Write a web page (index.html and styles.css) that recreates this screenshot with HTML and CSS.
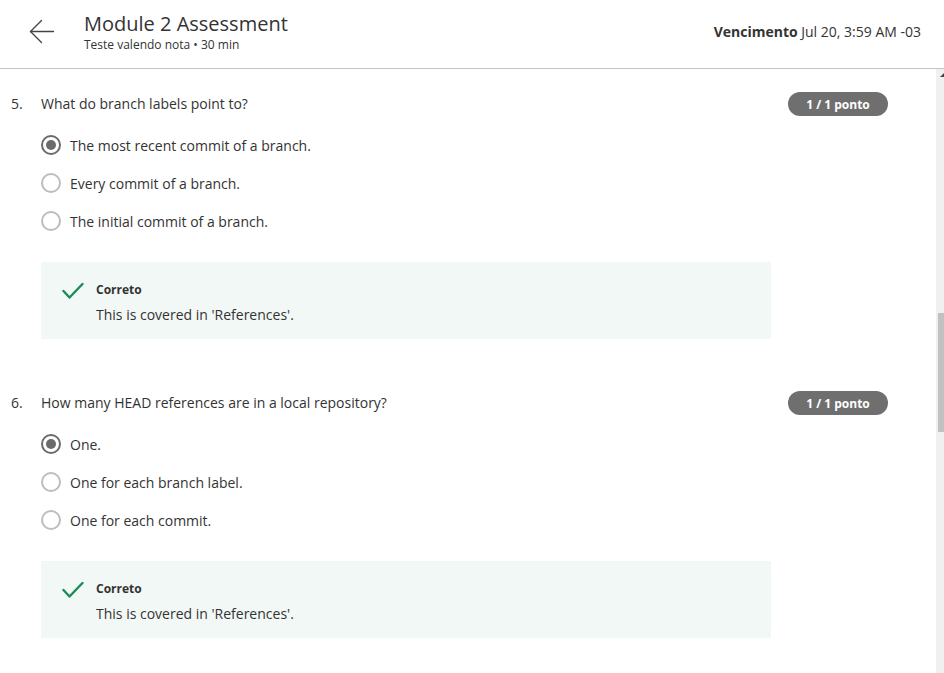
FILE: index.html
```html
<!DOCTYPE html>
<html lang="pt">
<head>
<meta charset="utf-8">
<title>Module 2 Assessment</title>
<link rel="stylesheet" href="styles.css">
</head>
<body>
<header class="topbar">
  <div class="topbar-left">
    <button class="back" aria-label="Voltar">
      <svg width="26" height="26" viewBox="0 0 26 26" fill="none" stroke="#444" stroke-width="1.4" stroke-linecap="round" stroke-linejoin="round">
        <path d="M1.5 12.5 H24.5"/>
        <path d="M12.5 1.5 L1.5 12.5 L12.5 23.5"/>
      </svg>
    </button>
    <div class="titles">
      <h1 class="title">Module 2 Assessment</h1>
      <div class="subtitle">Teste valendo nota • 30 min</div>
    </div>
  </div>
  <div class="due"><b>Vencimento</b> Jul 20, 3:59 AM -03</div>
</header>

<main class="content">
  <section class="question">
    <div class="q-head">
      <span class="q-num">5.</span>
      <span class="q-text">What do branch labels point to?</span>
      <span class="badge">1 / 1 ponto</span>
    </div>
    <ul class="options">
      <li class="option"><span class="radio checked"></span>The most recent commit of a branch.</li>
      <li class="option"><span class="radio"></span>Every commit of a branch.</li>
      <li class="option"><span class="radio"></span>The initial commit of a branch.</li>
    </ul>
    <div class="feedback">
      <svg class="check" width="22" height="18" viewBox="0 0 22 18" fill="none" stroke="#1e8a57" stroke-width="2.4" stroke-linecap="round" stroke-linejoin="round">
        <path d="M1.5 9 L7.5 15.5 L20.5 2"/>
      </svg>
      <div class="fb-body">
        <div class="fb-title">Correto</div>
        <div class="fb-text">This is covered in 'References'.</div>
      </div>
    </div>
  </section>

  <section class="question">
    <div class="q-head">
      <span class="q-num">6.</span>
      <span class="q-text">How many HEAD references are in a local repository?</span>
      <span class="badge">1 / 1 ponto</span>
    </div>
    <ul class="options">
      <li class="option"><span class="radio checked"></span>One.</li>
      <li class="option"><span class="radio"></span>One for each branch label.</li>
      <li class="option"><span class="radio"></span>One for each commit.</li>
    </ul>
    <div class="feedback">
      <svg class="check" width="22" height="18" viewBox="0 0 22 18" fill="none" stroke="#1e8a57" stroke-width="2.4" stroke-linecap="round" stroke-linejoin="round">
        <path d="M1.5 9 L7.5 15.5 L20.5 2"/>
      </svg>
      <div class="fb-body">
        <div class="fb-title">Correto</div>
        <div class="fb-text">This is covered in 'References'.</div>
      </div>
    </div>
  </section>

  <div class="scrollbar" aria-hidden="true">
    <span class="sb-arrow"></span>
    <span class="sb-thumb"></span>
  </div>
</main>
</body>
</html>
```

FILE: styles.css
```css
* { box-sizing: border-box; }
html, body { margin: 0; padding: 0; }
body {
  width: 944px;
  height: 673px;
  overflow: hidden;
  background: #fff;
  color: #333;
  font-family: "Open Sans", "Noto Sans", "Liberation Sans", sans-serif;
}

.topbar {
  height: 69px;
  border-bottom: 1px solid #c4c4c4;
  display: flex;
  align-items: center;
  justify-content: space-between;
  padding: 0 23px 0 0;
}
.topbar-left {
  display: flex;
  align-items: center;
}
.back {
  border: 0;
  background: none;
  padding: 0;
  margin: 0 29px 0 29px;
  width: 26px;
  height: 26px;
  display: flex;
  margin-top: -4px;
}
.titles { display: flex; flex-direction: column; }
.title {
  margin: 0;
  font-size: 20px;
  font-weight: 400;
  line-height: 26px;
  color: #333;
  margin-top: -5px;
}
.subtitle {
  font-size: 12px;
  line-height: 16px;
  color: #333;
  margin-top: 0;
}
.due {
  font-size: 14px;
  color: #333;
  margin-top: -5px;
}
.due b { font-weight: 700; }

.content {
  position: relative;
  height: 604px;
  overflow: hidden;
  padding: 22px 56px 0 11px;
}

.question { margin-bottom: 51px; }
.q-head {
  display: flex;
  align-items: center;
  height: 24px;
  font-size: 14px;
}
.q-num { width: 30px; }
.q-text { flex: 1; }
.badge {
  width: 100px;
  height: 24px;
  border-radius: 12px;
  background: #6f6f6f;
  color: #fff;
  font-size: 12px;
  font-weight: 700;
  display: flex;
  align-items: center;
  justify-content: center;
  margin-top: 2px;
}

.options {
  list-style: none;
  margin: 11px 0 0 30px;
  padding: 0;
}
.option {
  height: 38px;
  display: flex;
  align-items: center;
  font-size: 14px;
  color: #333;
}
.radio {
  width: 20px;
  height: 20px;
  border-radius: 50%;
  border: 2px solid #bdbdbd;
  margin-right: 9px;
  flex: none;
  position: relative;
}
.radio.checked { border-color: #6b6b6b; }
.radio.checked::after {
  content: "";
  position: absolute;
  left: 3px;
  top: 3px;
  width: 10px;
  height: 10px;
  border-radius: 50%;
  background: #6b6b6b;
}

.feedback {
  margin: 22px 0 0 30px;
  width: 730px;
  background: #f2f8f6;
  display: flex;
  align-items: flex-start;
  padding: 20px 0 14px 21px;
}
.check { flex: none; margin-top: 0; margin-right: 12px; }
.fb-title {
  font-size: 12px;
  font-weight: 700;
  line-height: 16px;
  color: #333;
}
.fb-text {
  font-size: 14px;
  line-height: 20px;
  margin-top: 7px;
  color: #333;
}

.scrollbar {
  position: absolute;
  top: 0;
  right: 0;
  width: 8px;
  height: 100%;
  background: #f0f0f0;
}
.sb-arrow {
  position: absolute;
  top: 4px;
  right: 0;
  width: 0;
  height: 0;
  border-left: 4px solid transparent;
  border-bottom: 4px solid #444;
}
.sb-thumb {
  position: absolute;
  top: 244px;
  right: 0;
  width: 6px;
  height: 119px;
  background: #c1c1c1;
}
```
